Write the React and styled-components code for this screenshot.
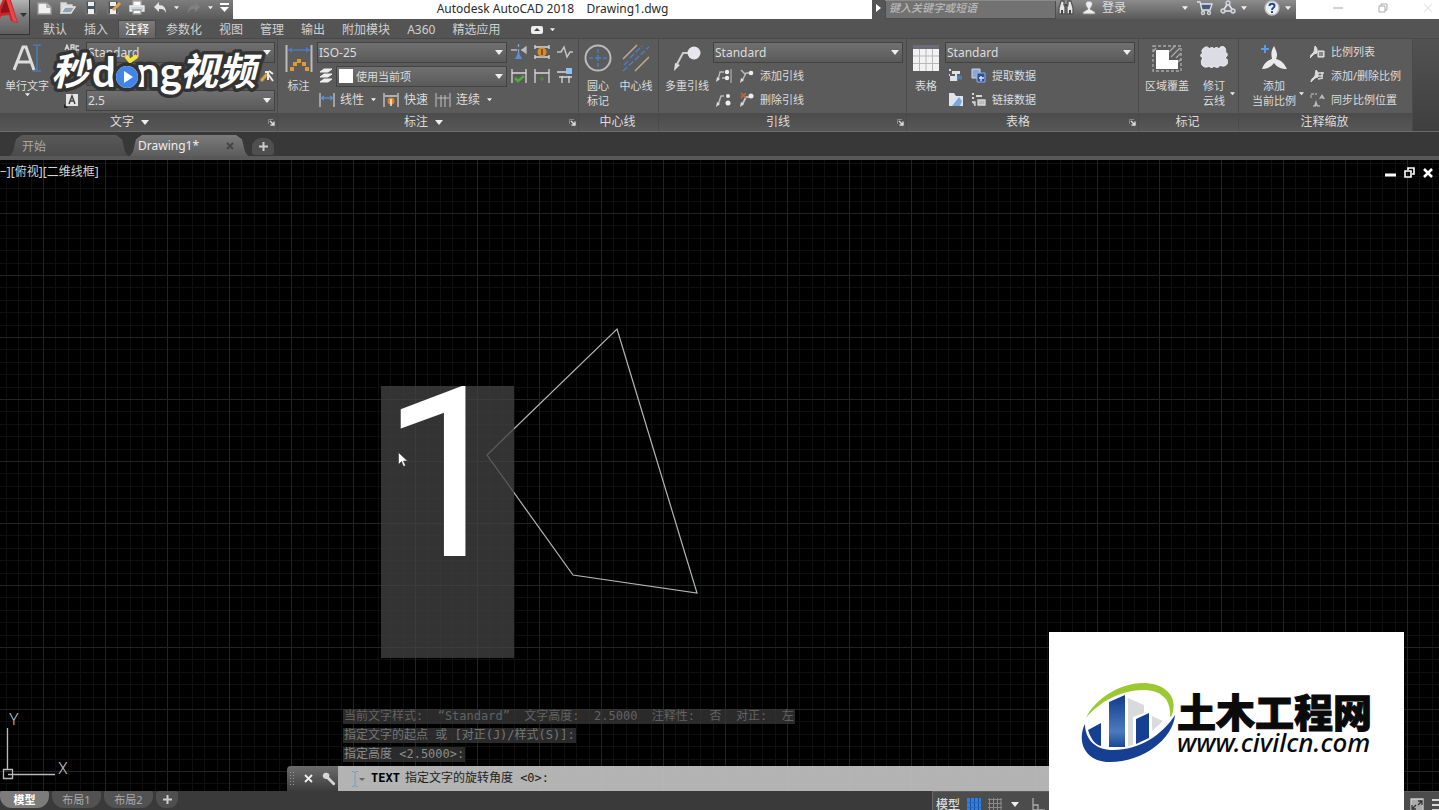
import React, { useState } from 'react';
import styled, { createGlobalStyle, css } from 'styled-components';

const GlobalStyle = createGlobalStyle`
  *, *::before, *::after { box-sizing: border-box; }
  html, body { margin: 0; background: #000; }
  body, button, input, select, textarea {
    font-family: 'Noto Sans', 'Noto Sans CJK SC', sans-serif;
    font-size: 12px;
    color: #dcdcdc;
  }
  button {
    border: 0;
    padding: 0;
    background: none;
    cursor: pointer;
  }
  svg { display: block; flex: none; }
`;

const Page = styled.div`
  position: relative;
  display: flex;
  flex-direction: column;
  height: 100vh;
  overflow: hidden;
`;

// Header: app button, title bar and ribbon tabs
const Header = styled.header`
  display: flex;
  background: #545454;
`;

const AppButton = styled.button`
  flex: none;
  width: 30px;
  height: 35px;
  display: flex;
  align-items: flex-start;
  background: linear-gradient(#b4b4b4, #7c7c7c 50%, #5f5f5f);
  border-right: 1px solid #333;
  border-bottom: 1px solid #333;
  overflow: hidden;
`;

const HeaderMain = styled.div`
  flex: 1;
  min-width: 0;
`;

const TitleBar = styled.div`
  display: flex;
  height: 19px;
  background: #fff;
`;

const QuickAccess = styled.div`
  display: flex;
  align-items: center;
  gap: 7px;
  width: 203px;
  padding: 0 6px 4px 7px;
  background: linear-gradient(#7d7d7d, #5a5a5a);
`;

const QuickButton = styled.button`
  display: flex;
  align-items: center;
  gap: 6px;
`;

const Title = styled.h1`
  flex: 1;
  margin: 0;
  font-size: 12px;
  font-weight: 400;
  line-height: 17px;
  text-align: center;
  white-space: pre;
  color: #2b2b2b;
`;

const InfoCenter = styled.div`
  display: flex;
  align-items: center;
  width: 424px;
  background: linear-gradient(#8c8c8c, #5a5a5a);
`;

const InfoArrow = styled.button`
  width: 13px;
  height: 19px;
  display: grid;
  place-items: center;
  padding-bottom: 4px;
  background: #555;
`;

const Search = styled.input`
  width: 171px;
  height: 18px;
  margin-right: 2px;
  padding: 0 3px 3px;
  border: 1px solid #4c4c4c;
  border-top: 0;
  background: #727272;
  font-style: italic;
  font-weight: 500;

  &::placeholder { color: #b8b8b8; opacity: 1; font-size: 11px; }
`;

const InfoItem = styled.button`
  flex: none;
  display: flex;
  align-items: center;
  gap: 5px;
  height: 19px;
  padding-bottom: 3px;
  line-height: 16px;
  white-space: nowrap;
  margin-right: ${({ $after }) => $after || 0}px;
`;

const WindowButtons = styled.div`
  display: flex;
  justify-content: space-between;
  align-items: center;
  width: 143px;
  padding: 0 6px 3px 37px;
`;

const Menu = styled.nav`
  display: flex;
  align-items: flex-end;
  gap: 5px;
  height: 19px;
  padding-left: 7px;
`;

const MenuTab = styled.button`
  height: 17px;
  padding: 0 6px;
  line-height: 16px;
  color: ${({ $active }) => ($active ? '#fff' : '#d0d0d0')};
  ${({ $active }) => $active && css`
    background: linear-gradient(#7a7a7a, #646464);
    box-shadow: 0 0 0 1px #484848;
  `}
`;

const MenuToggle = styled.button`
  display: flex;
  align-items: center;
  gap: 7px;
  height: 17px;
  margin-left: 20px;
`;

// Ribbon
const Ribbon = styled.div`
  display: flex;
  height: 94px;
  margin-left: -9px;
  background: linear-gradient(#525252, #3f3f3f);
  border-top: 1px solid #484848;
  border-bottom: 1px solid #6a6a6a;
`;

const PanelBox = styled.section`
  display: flex;
  flex-direction: column;
  flex: none;
  width: ${({ $width }) => $width}px;
  background: #5b5b5b;
  border-right: 1px solid #4a4a4a;
`;

const PanelBody = styled.div`
  flex: 1;
  display: flex;
  align-items: flex-start;
  gap: ${({ $gap }) => $gap}px;
  padding-top: 3px;
  padding-left: ${({ $left }) => $left}px;
`;

const PanelTitle = styled.div`
  display: flex;
  align-items: center;
  height: 18px;
  padding-right: 2px;
  background: linear-gradient(#4b4b4b, #575757);
`;

const PanelName = styled.button`
  flex: 1;
  display: flex;
  align-items: center;
  justify-content: center;
  gap: 7px;
  line-height: 18px;
`;

const Rows = styled.div`
  display: flex;
  flex-direction: column;
  gap: 4px;
  width: ${({ $width }) => ($width ? `${$width}px` : 'auto')};
`;

const Row = styled.div`
  display: flex;
  align-items: center;
  gap: ${({ $gap = 6 }) => $gap}px;
  height: 20px;
  padding-left: ${({ $indent = 0 }) => $indent}px;
`;

const BigButton = styled.button`
  flex: none;
  width: ${({ $width }) => $width}px;
  display: flex;
  flex-direction: column;
  align-items: center;
  padding-top: 2px;
  font-size: 11px;
  line-height: 15px;
  white-space: nowrap;

  svg:first-child { margin-bottom: 6px; }
`;

const Split = styled.div`
  display: flex;
  align-items: flex-end;
  gap: 2px;
`;

const CaretButton = styled.button`
  height: 16px;
  display: flex;
  align-items: flex-start;
`;

const ToolButton = styled.button`
  display: flex;
  align-items: center;
  gap: ${({ $gap = 5 }) => $gap}px;
  font-size: ${({ $size = 12 }) => $size}px;
  line-height: 16px;
  white-space: nowrap;
`;

const ComboBox = styled.div`
  flex: 1;
  display: grid;
  align-items: center;
  min-width: 0;
  height: 21px;
  background: linear-gradient(#707070, #5a5a5a);
  border: 1px solid #424242;

  > * { grid-area: 1 / 1; }
  > svg { justify-self: end; margin-right: 3px; pointer-events: none; }
`;

const NativeSelect = styled.select`
  appearance: none;
  width: 100%;
  height: 19px;
  padding: 0 0 0 ${({ $swatch }) => ($swatch ? 19 : 1)}px;
  border: 0;
  background: none;
  font-size: ${({ $swatch }) => ($swatch ? 11 : 12)}px;
`;

const Swatch = styled.span`
  width: 14px;
  height: 14px;
  margin-left: 2px;
  background: #fff;
`;

const FindBox = styled.input`
  flex: 1;
  min-width: 0;
  height: 20px;
  border: 1px solid #424242;
  background: #4e4e4e;
`;

// Drawing file tabs
const FileTabs = styled.div`
  display: flex;
  align-items: flex-end;
  gap: 2px;
  height: 28px;
  padding: 0 0 4px 10px;
  background: linear-gradient(#383838 24px, #585858 24px);
`;

const FileTab = styled.button`
  display: flex;
  align-items: center;
  justify-content: space-between;
  width: 118px;
  height: 21px;
  padding: 0 14px 0 ${({ $active }) => ($active ? 8 : 12)}px;
  clip-path: polygon(0 100%, 3px 80%, 6px 20%, 12px 0, 106px 0, 112px 20%, 115px 80%, 100% 100%);
  background: ${({ $active }) => ($active ? 'linear-gradient(#7c7c7c, #5c5c5c)' : 'linear-gradient(#595959, #4b4b4b)')};
  color: ${({ $active }) => ($active ? '#eee' : '#a8a8a8')};
`;

const NewTab = styled.button`
  display: grid;
  place-items: center;
  width: 22px;
  height: 17px;
  margin: ${({ $flip }) => ($flip ? 0 : '0 0 1px 2px')};
  border-radius: ${({ $flip }) => ($flip ? '3px 3px 9px 9px' : '9px 9px 3px 3px')};
  background: #4f4f4f;
`;

// Model space
const Canvas = styled.main`
  position: relative;
  flex: 1;
  min-height: 0;
  background: #000;
  overflow: hidden;
`;

const Drawing = styled.svg`
  position: absolute;
  inset: 0;
  width: 100%;
  height: 100%;
`;

const ViewControls = styled.div`
  position: relative;
  display: flex;
  justify-content: space-between;
  padding: 4px 5px 0 0;
  line-height: 16px;
`;

const ViewButton = styled.button`
  line-height: 16px;
  color: #d4d4d4;
`;

const ViewportButtons = styled.div`
  display: flex;
  align-items: center;
  gap: 8px;
`;

const InPlaceText = styled.textarea`
  position: absolute;
  left: 381px;
  top: 226px;
  width: 133px;
  height: 272px;
  padding: 0;
  border: 0;
  outline: 0;
  resize: none;
  overflow: hidden;
  background: rgba(66, 66, 66, 0.77);
  color: #fff;
  font-family: Roboto, sans-serif;
  font-size: 237px;
  line-height: 178px;
`;

const Cursor = styled.svg`
  position: absolute;
  left: 398px;
  top: 292px;
`;

const Ucs = styled.svg`
  position: absolute;
  left: 0;
  bottom: 0;
`;

const CommandDock = styled.div`
  position: absolute;
  left: 287px;
  right: 20%;
  bottom: 0;
`;

const History = styled.div`
  display: flex;
  flex-direction: column;
  align-items: flex-start;
  gap: 4px;
  padding: 0 0 4px 56px;
`;

const mono = css`
  font-family: 'DejaVu Sans Mono', 'Noto Sans CJK SC', monospace;
  font-size: 12px;
  line-height: 15px;
  white-space: pre;
`;

const HistoryLine = styled.p`
  ${mono}
  margin: 0;
  padding: 0 1px;
  background: rgba(60, 60, 60, 0.7);
  color: ${({ $color }) => $color};
`;

const CommandBar = styled.div`
  display: flex;
  height: 25px;
`;

const CommandGrip = styled.div`
  display: flex;
  align-items: center;
  gap: 9px;
  width: 51px;
  padding-left: 3px;
  border-radius: 4px 0 0 0;
  background: linear-gradient(#6c6c6c, #3c3c3c);
`;

const CommandLine = styled.label`
  ${mono}
  flex: 1;
  display: flex;
  align-items: center;
  padding-left: 14px;
  background: rgba(190, 190, 190, 0.94);
  color: #222;

  b { margin: 0 5px 0 6px; color: #000; }
`;

const CommandInput = styled.input`
  flex: 1;
  min-width: 0;
  border: 0;
  outline: 0;
  background: none;
  color: #111;
`;

// Layout tabs and status bar
const StatusBar = styled.footer`
  display: flex;
  align-items: flex-start;
  height: 19px;
  background: #3a3a3a;
  overflow: hidden;
`;

const LayoutTabs = styled.div`
  flex: 1;
  display: flex;
  gap: 3px;
`;

const LayoutTab = styled.button`
  width: 49px;
  height: 17px;
  border-radius: 2px 2px 12px 12px;
  background: ${({ $active }) => ($active ? '#7c7c7c' : '#525252')};
  color: ${({ $active }) => ($active ? '#fff' : '#aaa')};
  font-size: 11px;
  font-weight: ${({ $active }) => ($active ? 700 : 400)};
  line-height: 17px;
`;

const StatusTools = styled.div`
  display: flex;
  align-items: center;
  width: 515px;
  height: 26px;
  margin-right: -8px;
  padding: 0 2px 0 3px;
  background: #4c4c4c;
  border-left: 1px solid #6b6b6b;
  border-top: 1px solid #5e5e5e;
`;

const StatusButton = styled.button`
  display: flex;
  align-items: center;
  height: 24px;
  font-weight: 500;
  line-height: 16px;
  margin-right: ${({ $after = 7 }) => $after}px;
`;

const Spacer = styled.span`
  flex: 1;
`;

// Overlays
const VideoMark = styled.svg`
  position: absolute;
  left: 44px;
  top: 44px;
  pointer-events: none;
`;

const SiteCard = styled.a`
  position: absolute;
  right: 35px;
  bottom: 0;
  display: flex;
  align-items: center;
  width: 355px;
  height: 178px;
  padding: 4px 0 0 32px;
  background: #fff;
  color: #0a0a0a;
  text-decoration: none;
`;

const SiteText = styled.span`
  display: flex;
  flex-direction: column;
`;

const SiteName = styled.strong`
  font-family: 'Noto Sans CJK SC', sans-serif;
  font-size: 39px;
  font-weight: 900;
  line-height: 38px;
  white-space: nowrap;
  -webkit-text-stroke: 1px #0a0a0a;
`;

const SiteUrl = styled.span`
  font-family: 'Noto Sans', sans-serif;
  font-size: 26px;
  font-style: italic;
  font-weight: 500;
  line-height: 26px;
`;

// Small glyphs
const Caret = ({ size = 8, color = '#eee' }) => (
  <svg width={size} height={size / 2 + 1} viewBox="0 0 8 5" fill={color}>
    <path d="M0 0h8L4 5z" />
  </svg>
);

const Plus = () => (
  <svg width="9" height="9" viewBox="0 0 9 9" stroke="#ccc" strokeWidth="2">
    <path d="M4.500 0v9M0 4.500h9" />
  </svg>
);

const Launcher = () => (
  <button aria-label="对话框">
    <svg width="7" height="7" viewBox="0 0 7 7" fill="none" stroke="#ddd">
      <path d="M.5 5V.5H5" stroke="#888" />
      <path d="M2 2l4 4M6 2.500V6H2.500" strokeWidth="1.400" />
    </svg>
  </button>
);

const Svg = ({ size = 16, w, children, box }) => (
  <svg width={w || size} height={size} viewBox={box || `0 0 ${w || size} ${size}`} fill="none" stroke="#d8d8d8" strokeWidth="1.300">
    {children}
  </svg>
);

const icons = {
  newFile: <Svg><path d="M1 3h9l4 4v7H1z" fill="#f0f0f0" stroke="#999" /><path d="M10 3v4h4" stroke="#999" /></Svg>,
  open: <Svg><path d="M1 13V3h5l1 2h5v2" fill="#ddd" /><path d="M1 13l4-6h10l-4 6z" fill="#8fa3b5" stroke="#e8e8e8" /></Svg>,
  save: <Svg><path d="M3 1h10v13H3z" fill="#48535c" stroke="#777" /><path d="M5 2h6v4H5zM5 9h6v5H5z" fill="#eee" stroke="none" /></Svg>,
  saveAs: <Svg><path d="M2 1h10v13H2z" fill="#48535c" stroke="#777" /><path d="M4 2h6v4H4zM4 9h6v5H4z" fill="#eee" stroke="none" /><path d="M7 10l7-7" stroke="#e2a04c" strokeWidth="3" /></Svg>,
  print: <Svg><path d="M4 1h8v5H4z" fill="#fff" stroke="#aaa" /><path d="M1 6h14v5H1z" fill="#ccd2d8" stroke="#eee" /><path d="M4 10h8v4H4z" fill="#fff" stroke="#999" /></Svg>,
  undo: <Svg><path d="M7 2L2 7l5 5V9c4 0 5 0 7 4 0-5-2-8-7-8z" fill="#e4e4e4" stroke="none" /></Svg>,
  redo: <Svg><path d="M9 2l5 5-5 5V9C5 9 4 9 2 13c0-5 2-8 7-8z" fill="#808080" stroke="none" /></Svg>,
  more: <Svg size={9}><path d="M0 1h9" strokeWidth="2" stroke="#fff" /><path d="M0 4h9L4.500 9z" fill="#fff" stroke="none" /></Svg>,
  binoculars: <Svg><path d="M3 1h3v4l1 2v7H1V8zM10 1h3l2 7v6H9V7l1-2z" fill="#e6e6e6" stroke="#555" /><path d="M7 5h2M4 10v4M12 10v4" stroke="#444" strokeWidth="2" /></Svg>,
  user: <Svg><path d="M8 1c3 0 4 2 3 5l-2 3 5 3v2H2v-2l5-3-2-3C4 3 5 1 8 1z" fill="#eee" stroke="#888" strokeWidth="1" /></Svg>,
  cart: <Svg><path d="M0 2h3l2 8h8l2-6H4" fill="#4b5878" stroke="#dfe6f3" /><circle cx="6" cy="13" r="1.500" /><circle cx="12" cy="13" r="1.500" /></Svg>,
  a360: <Svg><path d="M8 3l5 8H3z" stroke="#dde5f2" strokeWidth="1.600" /><circle cx="8" cy="3" r="2" fill="#7d8ba8" /><circle cx="3" cy="11" r="2" fill="#7d8ba8" /><circle cx="13" cy="11" r="2" fill="#7d8ba8" /></Svg>,
  help: <Svg><circle cx="8" cy="8" r="7" fill="#eaf0fa" stroke="#bbb" /><path d="M5.500 6c0-3 5-3 5 0 0 2-2.500 1.500-2.500 4M8 11v2" stroke="#27467e" strokeWidth="2" /></Svg>,
  textA: <Svg size={28}><path d="M1 26L10 3h3l8 23M5 18h12" stroke="#ddd" strokeWidth="3" /><path d="M20 1h3l1 1 1-1h3M24 2v24M20 27h3l1-1 1 1h3" stroke="#4b7cb5" strokeWidth="1.500" /></Svg>,
  spell: <Svg><path d="M1 6l2-5 2 5M2 4h2M7 1v5h3V1zM7 3.500h3M15 2h-3v4h3" /><path d="M4 10l3 4 6-6" stroke="#6aa84f" /></Svg>,
  find: <Svg><path d="M2 13L8 6" stroke="#d9a441" strokeWidth="3" /><path d="M6 4h3v8M10 3l4 3M9 6l5 7" stroke="#e8e8e8" strokeWidth="2" /></Svg>,
  height: <Svg><path d="M2 2h12v12H2z" fill="#e4e4e4" stroke="none" /><path d="M5 12l3-8 3 8M6 9h4" stroke="#444" strokeWidth="1.500" /><path d="M0 12v4h4z" fill="#222" stroke="none" /></Svg>,
  dim: <Svg size={28}><path d="M1.500 1v27M26.500 1v27" stroke="#bbb" strokeWidth="2" /><path d="M3 6h22" stroke="#4b78c0" strokeWidth="1.500" /><path d="M3 6l4-3v6zM25 6l-4-3v6z" fill="#4b78c0" stroke="none" /><path d="M5 23h4v4H5zM8 18h4v4H8zM12 15h4v4h-4zM17 18h4v4h-4zM20 23h4v4h-4z" fill="#dd9a35" stroke="none" /></Svg>,
  layers: <Svg><path d="M2 4l4-3h8l-4 3zM2 9l4-3h8l-4 3zM2 14l4-3h8l-4 3z" fill="#eee" stroke="#eee" strokeWidth="1" /></Svg>,
  linear: <Svg><path d="M1 1v14M15 1v14" stroke="#bbb" strokeWidth="1.500" /><path d="M2 6h12M5 4L2 6l3 2M11 4l3 2-3 2" stroke="#5b8fd0" /></Svg>,
  quick: <Svg><path d="M1 1v14M15 1v14M2 4h12" stroke="#ccc" /><circle cx="8" cy="9" r="3.500" fill="#e5812c" stroke="none" /><path d="M8 7v7" stroke="#fff" /></Svg>,
  cont: <Svg><path d="M1 1v14M6 3v12M10 3v12M15 1v14M2 6h12" stroke="#bbb" strokeWidth="1.100" /></Svg>,
  breakD: <Svg><path d="M0 6h6M10 6h5M15 3l-4 3 4 3z" fill="#bbb" stroke="#bbb" /><path d="M7.500 0v3M7.500 5v6" stroke="#7fa8d8" /><path d="M4 15l3.500-7 3.500 7z" stroke="none" fill="#5b8fd0" /></Svg>,
  inspect: <Svg><path d="M1 1v4M15 1v4M1 11v4M15 11v4M1 3h14M1 13h14" /><circle cx="8" cy="8" r="4.500" fill="#d98a2b" stroke="none" /><path d="M8 5v6" stroke="#6b4a1e" strokeWidth="1.600" /></Svg>,
  jog: <Svg><path d="M0 8h4l3-5 3 10 3-5h3" stroke="#c4c4c4" strokeWidth="1.500" /></Svg>,
  update: <Svg><path d="M1 1v14M15 1v14M1 5h14" /><path d="M4 10l3 3 6-5" stroke="#4fae3a" strokeWidth="2.500" /></Svg>,
  reassoc: <Svg><path d="M1 1v14M15 1v14M1 5h14" /><path d="M6 11h4M8 9v4" stroke="#4f8a3a" strokeWidth="1.500" /></Svg>,
  adjust: <Svg><path d="M0 4h9M5 8v7M12 8v7M2 9h13" /><path d="M9 0h6v6H9z" fill="#8ec1f3" stroke="none" /></Svg>,
  centerMark: <Svg size={28}><circle cx="14" cy="14" r="12.500" stroke="#bbb" strokeWidth="2" /><path d="M14 5v4M14 11v6M14 19v4M5 14h4M11 14h6M19 14h4" stroke="#4b7fc4" strokeWidth="1.400" /></Svg>,
  centerLine: <Svg size={28}><path d="M1 15L15 1M13 27l14-14" stroke="#b9ad94" strokeWidth="1.500" /><path d="M1 27L27 3M8 14l12-12M2 21l4-4" stroke="#4b7fc4" strokeWidth="1.400" strokeDasharray="6 2" /></Svg>,
  leader: <Svg size={28}><path d="M3 22L10 9h7" stroke="#ccc" strokeWidth="2" /><path d="M1 27l1-8 5 2z" fill="#ddd" stroke="none" /><circle cx="21" cy="9" r="6.500" fill="#e6e6ec" stroke="none" /></Svg>,
  align: <Svg><path d="M2 12l2-8h4M6 10h3" stroke="#bbb" /><path d="M15 1v14" stroke="#aaa" /><circle cx="11" cy="4" r="2.200" fill="#eee" stroke="none" /><circle cx="11" cy="10" r="2.200" fill="#eee" stroke="none" /><path d="M0 14l1-5 3 2z" fill="#ddd" stroke="none" /></Svg>,
  addLeader: <Svg><path d="M3 13L7 5h5M6 6L2 2" stroke="#bbb" strokeWidth="1.500" /><circle cx="12" cy="5" r="2.300" fill="#eee" stroke="none" /><path d="M1 15l1-5 3 2z" fill="#ddd" stroke="none" /></Svg>,
  collect: <Svg><path d="M2 13l3-9h3" stroke="#bbb" strokeWidth="1.500" /><circle cx="12" cy="4" r="2" fill="#eee" stroke="none" /><circle cx="12" cy="11" r="2.500" fill="#eee" stroke="none" /><path d="M0 15l1-5 3 2z" fill="#ddd" stroke="none" /></Svg>,
  removeLeader: <Svg><path d="M3 13L7 5h5" stroke="#ccc" strokeWidth="1.700" /><path d="M2 1l5 5M7 1L2 6" stroke="#c06a3a" strokeWidth="1.500" /><circle cx="12" cy="4" r="2.500" fill="#eee" stroke="none" /><path d="M1 15l1-5 3 2z" fill="#ddd" stroke="none" /></Svg>,
  table: <Svg size={28}><path d="M1 1h26v26H1z" fill="#f2f2f2" stroke="none" /><path d="M1 1h26v4H1z" fill="#6c6c78" stroke="none" /><path d="M7.500 5v22M14 5v22M20.500 5v22M1 12h26M1 19.500h26" stroke="#b8b8b8" strokeWidth="1" /></Svg>,
  dlink: <Svg><path d="M4 3h8v3h-3v7H2V8h5V6H4z" fill="#dfe2e6" stroke="none" /><path d="M1 2h2M1 7h1" stroke="#ddd" strokeWidth="2" /><path d="M9 7l5 1v4l-3-1-2 3z" fill="#4e7fae" stroke="none" /></Svg>,
  extract: <Svg><path d="M1 1h8v9H1z" fill="#8fa6cf" stroke="#cfd8ea" strokeWidth="1" /><path d="M6 5h8v9H6z" fill="#2f4f95" stroke="#8fb0ee" strokeWidth="1" /><path d="M8 10h5M10 8v5" stroke="#dbe6ff" /></Svg>,
  upload: <Svg><path d="M1 1h5l2 3h7v10H1z" fill="#dfe4ea" stroke="none" /><path d="M4 14l7-9 3 4-2 5z" fill="#7aa7dc" stroke="none" /></Svg>,
  linkData: <Svg><path d="M1 2h2M1 6h2M5 4h6" strokeWidth="2" /><path d="M1 10h3v4M7 8h7v5H7z" fill="#bbb" /></Svg>,
  wipeout: <Svg size={28} w={32}><path d="M2 2h28v25H2z" stroke="#aaa" strokeDasharray="3 2" /><path d="M18 8l6-6M20 13l9-9M25 14l5-5M2 8l3-4M27 18l3-3" stroke="#aaa" /><path d="M5 6h13v10h9v9H5z" fill="#fff" stroke="none" /></Svg>,
  cloud: <Svg size={28}><path d="M4 4c2-2 5-1 5 1 2-2 4-2 5 0 1-2 4-2 5 0 1-3 5-3 6-1s1 4 0 4c3 1 3 4 0 6 3 1 3 4 2 6s-5 3-7 1c-1 3-4 3-6 1-1 2-4 2-5 0-2 2-6 1-7-1s-1-5 1-7c-3-1-3-4 0-5-2-1-1-4 1-5z" fill="#dcdce4" stroke="#f4f4f4" strokeWidth="1" /></Svg>,
  scale: <Svg size={28}><path d="M14 2c3 6 4 9 2 13 5 1 8 4 11 10-6 0-10-2-13-6-3 4-6 6-12 6 2-6 6-9 10-10-1-5-1-8 2-13z" fill="#eaeaea" stroke="none" /><path d="M5 1v8M1 5h8" stroke="#5b9be6" strokeWidth="2" /></Svg>,
  scaleList: <Svg><path d="M5 2c3 3 2 5 2 7l-3 1-4 4c0-3 2-4 4-6z" fill="#dcdcdc" stroke="#dcdcdc" strokeWidth="1" /><path d="M8 7h6v6H8z" fill="#bbb" stroke="#eee" strokeWidth="1" /><path d="M9 9h4M9 11h4" stroke="#555" strokeWidth="1" /></Svg>,
  scaleEdit: <Svg><path d="M6 2c3 3 2 5 2 7l-3 1-4 4c0-3 2-4 4-6z" fill="#dcdcdc" stroke="#dcdcdc" strokeWidth="1" /><path d="M8 5h6M8 8h5M8 11l5-1M12 4v5" strokeWidth="1.600" /></Svg>,
  scaleSync: <Svg><path d="M1 6V2h6M3 14h7" stroke="#aaa" strokeDasharray="3 1" /><path d="M12 2l3 5h-2l-1-1-2 1H9zM6 8l2 6H4z" fill="#bbb" stroke="none" /></Svg>,
  gridBlue: <Svg size={14}><path d="M0 0h14v14H0z" fill="#2f7fe0" stroke="none" /><path d="M3.500 0v14M7.500 0v14M11.500 0v14" stroke="#1c4f9a" strokeWidth="1" /><path d="M0 4.500h14M0 9.500h14" stroke="#2a6ac0" strokeWidth="1" /></Svg>,
  gridGray: <Svg size={14}><path d="M1.500 0v14M5.500 0v14M9.500 0v14M13 0v14M0 1.500h14M0 5.500h14M0 9.500h14M0 13h14" stroke="#8a8a8a" strokeWidth="1" /></Svg>,
  ortho: <Svg size={14}><path d="M2 0v12h12M2 7h5v5" stroke="#aaa" /></Svg>,
  fullscreen: <Svg size={14}><path d="M1 1h12v12H1z" fill="#aaa" stroke="#ccc" /><path d="M8 3h4v4M6 11H2V7M12 3L8 7M2 11l4-4" stroke="#333" /></Svg>,
  burger: <Svg size={14}><path d="M1 2h13M1 7h13M1 12h13" strokeWidth="2" /></Svg>,
};

const Panel = ({ title, width, gap = 5, left = 5, caret, launcher, children }) => (
  <PanelBox $width={width}>
    <PanelBody $gap={gap} $left={left}>{children}</PanelBody>
    <PanelTitle>
      <PanelName>{title}{caret && <Caret />}</PanelName>
      {launcher && <Launcher />}
    </PanelTitle>
  </PanelBox>
);

const Combo = ({ label, value, swatch }) => (
  <ComboBox>
    {swatch && <Swatch />}
    <NativeSelect aria-label={label} $swatch={swatch}>
      <option>{value}</option>
    </NativeSelect>
    <Caret />
  </ComboBox>
);

const menuTabs = ['默认', '插入', '注释', '参数化', '视图', '管理', '输出', '附加模块', 'A360', '精选应用'];

// Older lines fade out
const history = [
  ['当前文字样式:  “Standard”  文字高度:  2.5000  注释性:  否  对正:  左', '#626262'],
  ['指定文字的起点 或 [对正(J)/样式(S)]:', '#767676'],
  ['指定高度 <2.5000>:', '#8c8c8c'],
];

const TopHeader = () => {
  const [active, setActive] = useState('注释');

  return (
    <Header>
      <AppButton aria-label="应用程序菜单">
        <svg width="30" height="34" viewBox="0 0 30 34">
          <path d="M-8 24L4-3h6l8 26-7-2-2-6-8 1-3 8z" fill="#c9252b" />
          <path d="M1 10l5-11 4 13-9 1z" fill="#8f1318" />
          <path d="M9-2l8 24-4-1L6-1z" fill="#e8484c" />
          <path d="M20 13h7l-3.500 4z" fill="#333" />
        </svg>
      </AppButton>
      <HeaderMain>
        <TitleBar>
          <QuickAccess>
            <QuickButton aria-label="新建">{icons.newFile}</QuickButton>
            <QuickButton aria-label="打开">{icons.open}</QuickButton>
            <QuickButton aria-label="保存">{icons.save}</QuickButton>
            <QuickButton aria-label="另存为">{icons.saveAs}</QuickButton>
            <QuickButton aria-label="打印">{icons.print}</QuickButton>
            <QuickButton aria-label="放弃">{icons.undo}<Caret size={5} /></QuickButton>
            <QuickButton aria-label="重做">{icons.redo}<Caret size={5} /></QuickButton>
            <QuickButton aria-label="自定义">{icons.more}</QuickButton>
          </QuickAccess>
          <Title>{'Autodesk AutoCAD 2018    Drawing1.dwg'}</Title>
          <InfoCenter>
            <InfoArrow aria-label="展开">
              <svg width="5" height="8" viewBox="0 0 5 8" fill="#fff"><path d="M0 0l5 4-5 4z" /></svg>
            </InfoArrow>
            <Search aria-label="搜索" placeholder="键入关键字或短语" />
            <InfoItem aria-label="搜索" $after={7}>{icons.binoculars}</InfoItem>
            <InfoItem $after={56}>{icons.user}登录</InfoItem>
            <InfoItem aria-label="登录选项" $after={9}><Caret size={6} /></InfoItem>
            <InfoItem aria-label="应用商店" $after={7}>{icons.cart}</InfoItem>
            <InfoItem aria-label="保持连接" $after={17}>{icons.a360}<Caret size={6} /></InfoItem>
            <InfoItem aria-label="帮助">{icons.help}<Caret size={6} /></InfoItem>
          </InfoCenter>
          <WindowButtons>
            <button aria-label="最小化"><Svg size={10}><path d="M0 5h10" stroke="#bbb" /></Svg></button>
            <button aria-label="还原"><Svg size={10}><path d="M1 3h6v6H1zM3 3V1h6v6H7" stroke="#aaa" strokeWidth="1" /></Svg></button>
            <button aria-label="关闭"><Svg size={10}><path d="M1 1l8 8M9 1L1 9" stroke="#e8e8e8" /></Svg></button>
          </WindowButtons>
        </TitleBar>
        <Menu>
          {menuTabs.map((name) => (
            <MenuTab key={name} $active={name === active} onClick={() => setActive(name)}>{name}</MenuTab>
          ))}
          <MenuToggle aria-label="最小化功能区">
            <svg width="12" height="8" viewBox="0 0 12 8"><rect width="12" height="8" rx="2" fill="#eee" /><path d="M3 5l3-3 3 3z" fill="#444" /></svg>
            <Caret size={5} />
          </MenuToggle>
        </Menu>
      </HeaderMain>
    </Header>
  );
};

const RibbonPanels = () => (
  <Ribbon>
    <Panel title="文字" width={287} left={12} gap={13} caret launcher>
      <BigButton $width={48}>{icons.textA}单行文字<Caret size={5} /></BigButton>
      <Rows $width={211}>
        <Row>{icons.spell}<Combo label="文字样式" value="Standard" /></Row>
        <Row $indent={22}><FindBox aria-label="查找文字" />{icons.find}</Row>
        <Row>{icons.height}<Combo label="文字高度" value="2.5" /></Row>
      </Rows>
    </Panel>

    <Panel title="标注" width={301} left={6} gap={4} caret launcher>
      <BigButton $width={29}>{icons.dim}标注</BigButton>
      <Rows $width={190}>
        <Row><Combo label="标注样式" value="ISO-25" /></Row>
        <Row $indent={1} $gap={2}>{icons.layers}<Combo label="标注图层" value="使用当前项" swatch /></Row>
        <Row $indent={2} $gap={7}>
          <ToolButton>{icons.linear}线性</ToolButton>
          <ToolButton aria-label="线性选项"><Caret size={5} /></ToolButton>
          <ToolButton>{icons.quick}快速</ToolButton>
          <ToolButton>{icons.cont}连续</ToolButton>
          <ToolButton aria-label="连续选项"><Caret size={5} /></ToolButton>
        </Row>
      </Rows>
      <Rows>
        <Row $gap={7}>
          <ToolButton aria-label="打断">{icons.breakD}</ToolButton>
          <ToolButton aria-label="检验">{icons.inspect}</ToolButton>
          <ToolButton aria-label="折弯">{icons.jog}</ToolButton>
        </Row>
        <Row $gap={7}>
          <ToolButton aria-label="更新">{icons.update}</ToolButton>
          <ToolButton aria-label="重新关联">{icons.reassoc}</ToolButton>
          <ToolButton aria-label="调整间距">{icons.adjust}</ToolButton>
        </Row>
      </Rows>
    </Panel>

    <Panel title="中心线" width={80} gap={6}>
      <BigButton $width={28}>{icons.centerMark}<span>圆心<br />标记</span></BigButton>
      <BigButton $width={36}>{icons.centerLine}中心线</BigButton>
    </Panel>

    <Panel title="引线" width={248} gap={3} launcher>
      <BigButton $width={46}>{icons.leader}多重引线</BigButton>
      <Rows $width={190}>
        <Row><Combo label="多重引线样式" value="Standard" /></Row>
        <Row $indent={3} $gap={7}>
          <ToolButton aria-label="对齐">{icons.align}</ToolButton>
          <ToolButton $size={11}>{icons.addLeader}添加引线</ToolButton>
        </Row>
        <Row $indent={3} $gap={7}>
          <ToolButton aria-label="合并">{icons.collect}</ToolButton>
          <ToolButton $size={11}>{icons.removeLeader}删除引线</ToolButton>
        </Row>
      </Rows>
    </Panel>

    <Panel title="表格" width={232} launcher>
      <BigButton $width={28}>{icons.table}表格</BigButton>
      <Rows $width={190}>
        <Row><Combo label="表格样式" value="Standard" /></Row>
        <Row $indent={3} $gap={7}>
          <ToolButton aria-label="从源下载">{icons.dlink}</ToolButton>
          <ToolButton $size={11}>{icons.extract}提取数据</ToolButton>
        </Row>
        <Row $indent={3} $gap={7}>
          <ToolButton aria-label="上载到源">{icons.upload}</ToolButton>
          <ToolButton $size={11}>{icons.linkData}链接数据</ToolButton>
        </Row>
      </Rows>
    </Panel>

    <Panel title="标记" width={100} gap={10}>
      <BigButton $width={46}>{icons.wipeout}区域覆盖</BigButton>
      <Split>
        <BigButton $width={28}>{icons.cloud}<span>修订<br />云线</span></BigButton>
        <CaretButton aria-label="修订云线选项"><Caret size={5} /></CaretButton>
      </Split>
    </Panel>

    <Panel title="注释缩放" width={174} left={12} gap={6}>
      <Split>
        <BigButton $width={46}>{icons.scale}<span>添加<br />当前比例</span></BigButton>
        <CaretButton aria-label="比例选项"><Caret size={5} /></CaretButton>
      </Split>
      <Rows>
        <Row><ToolButton $size={11}>{icons.scaleList}比例列表</ToolButton></Row>
        <Row><ToolButton $size={11}>{icons.scaleEdit}添加/删除比例</ToolButton></Row>
        <Row><ToolButton $size={11}>{icons.scaleSync}同步比例位置</ToolButton></Row>
      </Rows>
    </Panel>
  </Ribbon>
);

const ModelSpace = () => {
  const [text, setText] = useState('1');

  return (
    <Canvas>
      <Drawing>
        <defs>
          <pattern id="grid" x="43" y="53" width="62" height="62" patternUnits="userSpaceOnUse">
            <path d="M12.500 0v62M25.500 0v62M37.500 0v62M50.500 0v62M0 12.500h62M0 25.500h62M0 37.500h62M0 50.500h62" stroke="#0e1010" />
            <path d="M.5 0v62M0 .5h62" stroke="#202424" />
          </pattern>
        </defs>
        <rect width="100%" height="100%" fill="url(#grid)" />
        <path d="M617 169L697 433L573 415L487 295Z" fill="none" stroke="#b4b4b4" strokeWidth="1.200" />
      </Drawing>

      <ViewControls>
        <div>
          <ViewButton>−]</ViewButton>
          <ViewButton>[俯视]</ViewButton>
          <ViewButton>[二维线框]</ViewButton>
        </div>
        <ViewportButtons>
          <button aria-label="最小化视口"><Svg size={11}><path d="M0 8h11" stroke="#fff" strokeWidth="3" /></Svg></button>
          <button aria-label="还原视口"><Svg size={11}><path d="M1 4h6v6H1zM4 3V1h6v6H8" stroke="#fff" strokeWidth="1.600" /></Svg></button>
          <button aria-label="关闭视口"><Svg size={11}><path d="M1 2l8 8M9 2l-8 8" stroke="#fff" strokeWidth="2.500" /></Svg></button>
        </ViewportButtons>
      </ViewControls>

      <InPlaceText aria-label="单行文字" spellCheck={false} value={text} onChange={(e) => setText(e.target.value)} />
      <Cursor width="11" height="17" viewBox="0 0 11 17">
        <path d="M.5.5v12l3-3 2 5 2-1-2-4.500h4z" fill="#fff" stroke="#333" strokeWidth=".6" />
      </Cursor>

      <Ucs width="76" height="84" viewBox="0 0 76 84" fill="none" stroke="#b8b8b8">
        <path d="M7.500 21v42M3.500 62.500h9v9h-9zM8 67.500h47" strokeWidth="1.300" />
        <text x="9" y="18" fill="#c4c4c4" stroke="none" fontSize="16" fontFamily="Roboto" fontWeight="300">Y</text>
        <text x="58" y="67" fill="#c4c4c4" stroke="none" fontSize="16" fontFamily="Roboto" fontWeight="300">X</text>
      </Ucs>

      <CommandDock>
        <History>
          {history.map(([line, color]) => (
            <HistoryLine key={line} $color={color}>{line}</HistoryLine>
          ))}
        </History>
        <CommandBar>
          <CommandGrip>
            <svg width="5" height="14" viewBox="0 0 5 14" stroke="#999" strokeDasharray="1 2"><path d="M.5 0v14M3.500 0v14" /></svg>
            <button aria-label="关闭命令行"><Svg size={9}><path d="M1 1l7 7M8 1L1 8" stroke="#eee" strokeWidth="1.800" /></Svg></button>
            <button aria-label="自定义">
              <Svg size={14}><path d="M1 3l2 2 2-1V1C3 0 0 2 1 5c1 2 3 2 4 2l6 6c1 1 3-1 2-2L7 5c1-2 0-4-2-4v3L3 5z" fill="#d6d6d6" stroke="none" /></Svg>
            </button>
          </CommandGrip>
          <CommandLine>
            <svg width="13" height="16" viewBox="0 0 13 16" fill="none" stroke="#6f9cc8"><path d="M0 .5h2l1 1 1-1h2M3 1v14M0 15.500h2l1-1 1 1h2" /><path d="M7 7h6l-3 3z" fill="#666" stroke="none" /></svg>
            <b>TEXT</b>
            {'指定文字的旋转角度 <0>:'}
            <CommandInput aria-label="命令输入" />
          </CommandLine>
        </CommandBar>
      </CommandDock>
    </Canvas>
  );
};

const App = () => (
  <Page>
    <GlobalStyle />
    <TopHeader />
    <RibbonPanels />

    <FileTabs>
      <FileTab>开始</FileTab>
      <FileTab $active>
        Drawing1*
        <Svg size={8}><path d="M1 1l6 6M7 1L1 7" stroke="#444" strokeWidth="1.800" /></Svg>
      </FileTab>
      <NewTab aria-label="新图形"><Plus /></NewTab>
    </FileTabs>

    <ModelSpace />

    <StatusBar>
      <LayoutTabs>
        <LayoutTab $active>模型</LayoutTab>
        <LayoutTab>布局1</LayoutTab>
        <LayoutTab>布局2</LayoutTab>
        <NewTab $flip aria-label="新建布局"><Plus /></NewTab>
      </LayoutTabs>
      <StatusTools>
        <StatusButton>模型</StatusButton>
        <StatusButton aria-label="栅格">{icons.gridBlue}</StatusButton>
        <StatusButton aria-label="捕捉" $after={9}>{icons.gridGray}</StatusButton>
        <StatusButton aria-label="捕捉选项" $after={12}><Caret /></StatusButton>
        <StatusButton aria-label="正交">{icons.ortho}</StatusButton>
        <Spacer />
        <StatusButton aria-label="全屏显示">{icons.fullscreen}</StatusButton>
        <StatusButton aria-label="自定义" $after={0}>{icons.burger}</StatusButton>
      </StatusTools>
    </StatusBar>

    <VideoMark width="230" height="60" viewBox="0 0 230 60" fill="#fff" stroke="#333" strokeWidth="7" strokeLinejoin="round" paintOrder="stroke">
      <g fontFamily="'Noto Sans CJK SC', sans-serif" fontSize="38" fontWeight="700" fontStyle="italic">
        <text x="7" y="41">秒</text>
        <text x="136" y="41">视频</text>
      </g>
      <g fontFamily="Lato, sans-serif" fontSize="42" fontWeight="700">
        <text x="48" y="43">d</text>
        <text x="92" y="43">ng</text>
      </g>
      <circle cx="83" cy="33" r="11" />
      <circle cx="83" cy="33" r="11" fill="#4285e8" stroke="none" />
      <path d="M80 27l9 6-9 6z" stroke="none" />
      <path d="M82 12l4 5 7-5" fill="none" stroke="#f3e53c" strokeWidth="4" />
    </VideoMark>

    <SiteCard href="#civilcn">
      <svg width="96" height="80" viewBox="0 0 96 80">
        <defs>
          <linearGradient id="tower" x1="0" y1="0" x2="0" y2="1">
            <stop offset="0" stopColor="#123a8c" />
            <stop offset=".7" stopColor="#4a7cbd" />
            <stop offset="1" stopColor="#1b4696" />
          </linearGradient>
        </defs>
        <path d="M5 35C13 17 38 0 62 0c22 0 37 14 28 34l-1-1C90 18 82 7 62 7 40 7 18 19 5 35z" fill="#9cc832" />
        <path d="M4 41C-4 56 2 79 29 79 62 79 92 56 94 32 82 51 59 67 32 67 15 67 4 57 4 41z" fill="#163f92" />
        <path d="M7 47l13-7v23c-5-1-10-6-13-16z" fill="#163f92" />
        <path d="M28 19l16-7v52H28z" fill="url(#tower)" />
        <path d="M47 15l16 7v8l-11 4v28l-5 1zM71 33l11 5-11 10z" fill="#d9dade" />
        <path d="M55 36l13-6v25l-13 6z" fill="#163f92" />
      </svg>
      <SiteText>
        <SiteName>土木工程网</SiteName>
        <SiteUrl>www.civilcn.com</SiteUrl>
      </SiteText>
    </SiteCard>
  </Page>
);

export default App;
